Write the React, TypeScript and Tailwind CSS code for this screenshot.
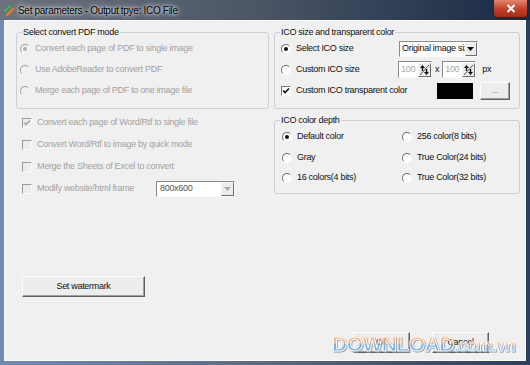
import type { ReactNode } from "react";

const FONT = { fontFamily: '"Liberation Sans", Arial, sans-serif' };

function Radio({ checked, disabled }: { checked?: boolean; disabled?: boolean }) {
  return (
    <span
      className={`relative flex h-[10px] w-[10px] shrink-0 items-center justify-center rounded-full border border-b-[#fafafa] border-l-[#6f6f6f] border-r-[#fafafa] border-t-[#6f6f6f] ${
        disabled ? "bg-[#f0f0f0] opacity-60" : "bg-white"
      }`}
    >
      {checked && <span className={`h-[4px] w-[4px] rounded-full ${disabled ? "bg-[#8a8a8a]" : "bg-[#111]"}`} />}
    </span>
  );
}

function Check({ checked, disabled }: { checked?: boolean; disabled?: boolean }) {
  return (
    <span
      className={`flex h-[10px] w-[10px] shrink-0 items-center justify-center border border-b-[#fdfdfd] border-l-[#777] border-r-[#fdfdfd] border-t-[#777] ${
        disabled ? "bg-[#ececec] opacity-70" : "bg-white"
      }`}
    >
      {checked && (
        <svg width="8" height="8" viewBox="0 0 8 8">
          <path d="M1 3.5 L3 5.5 L7 1.5" fill="none" stroke={disabled ? "#8c8c8c" : "#111"} strokeWidth="1.6" />
        </svg>
      )}
    </span>
  );
}

function Option({ kind, label, checked, disabled, w }: { kind: "radio" | "check"; label: string; checked?: boolean; disabled?: boolean; w?: string }) {
  return (
    <div className={`flex items-center gap-[5px] ${w ?? ""}`}>
      {kind === "radio" ? <Radio checked={checked} disabled={disabled} /> : <Check checked={checked} disabled={disabled} />}
      <span className={`whitespace-nowrap ${disabled ? "text-[#a2a2a2]" : "text-[#111]"}`}>{label}</span>
    </div>
  );
}

function Group({ title, className, children }: { title: string; className?: string; children: ReactNode }) {
  return (
    <fieldset className={`rounded-[3px] border border-[#c9d0d6] ${className ?? ""}`}>
      <legend className="ml-[5px] px-[1px] leading-[12px] text-[#111]">{title}</legend>
      {children}
    </fieldset>
  );
}

function ArrowBtn({ disabled }: { disabled?: boolean }) {
  return (
    <span className="flex h-full w-[13px] items-center justify-center border border-b-[#6d6d6d] border-l-[#f4f4f4] border-r-[#6d6d6d] border-t-[#f4f4f4] bg-[#ececec]">
      <svg width="7" height="4" viewBox="0 0 7 4">
        <path d="M0 0 H7 L3.5 4 Z" fill={disabled ? "#a8a8a8" : "#111"} />
      </svg>
    </span>
  );
}

function Spin() {
  return (
    <span className="flex h-[14px] w-[13px] items-center justify-center border border-b-[#6d6d6d] border-l-[#f4f4f4] border-r-[#6d6d6d] border-t-[#f4f4f4] bg-[#ececec]">
      <svg width="11" height="12" viewBox="0 0 11 12">
        <path d="M1 11 L10 1" stroke="#555" strokeWidth="1" />
        <path d="M3.5 1 L1 4 H2.8 V7 H4.2 V4 H6 Z" fill="#111" />
        <path d="M7.5 11 L10 8 H8.2 V5 H6.8 V8 H5 Z" fill="#111" />
      </svg>
    </span>
  );
}

function SpinBox() {
  return (
    <div className="flex h-[17px] w-[34px] items-center justify-between border border-b-[#fafafa] border-l-[#8a8a8a] border-r-[#fafafa] border-t-[#8a8a8a] bg-white pl-[2px]">
      <span className="text-[#a8a8a8]">100</span>
      <Spin />
    </div>
  );
}

function Button({ label, className }: { label: string; className?: string }) {
  return (
    <div
      className={`flex items-center justify-center border border-b-[#5f5f5f] border-l-[#fdfdfd] border-r-[#5f5f5f] border-t-[#fdfdfd] bg-[#ededed] text-[#111] shadow-[inset_-1px_-1px_0_#a0a0a0] ${className ?? ""}`}
    >
      {label}
    </div>
  );
}

export default function App() {
  return (
    <div
      className="flex h-[365px] w-[530px] flex-col overflow-hidden bg-linear-to-r from-[#6f8bb0] via-[#5a6a82] to-[#2c3e5c] text-[9px] tracking-[-0.3px]"
      style={FONT}
    >
      {/* title bar */}
      <div className="flex h-[20px] shrink-0 items-center bg-linear-to-r from-[#6c737e] via-[#4a5465] to-[#1a2a44] pl-[3px]">
        <svg width="13" height="13" viewBox="0 0 13 13">
          <path d="M2 7 L7 2" stroke="#3fb34f" strokeWidth="2.4" strokeLinecap="round" />
          <path d="M4 11 L10 5" stroke="#f07a20" strokeWidth="2.4" strokeLinecap="round" />
        </svg>
        <span className="ml-[2px] text-[10px] text-black [text-shadow:0_0_6px_#fff,0_0_3px_#fff]">
          Set parameters - Output tpye: ICO File
        </span>
        <div className="ml-auto mr-[2px] flex h-[18px] w-[35px] self-start items-center justify-center rounded-b-[4px] border border-t-0 border-[#4a1a12] bg-linear-to-b from-[#e0866e] via-[#c4432a] to-[#a52a16]">
          <svg width="10" height="9" viewBox="0 0 10 9">
            <path d="M1.5 1 L8.5 8 M8.5 1 L1.5 8" stroke="#fff" strokeWidth="2" />
          </svg>
        </div>
      </div>

      {/* client area */}
      <div className="relative mx-[4px] mb-[4px] flex flex-1 flex-col border border-[#fbfbfb] bg-[#f0f0f0] pl-[11px] pr-[5px] pt-[5px]">
        <div className="flex">
          {/* left column */}
          <div className="flex w-[253px] flex-col">
            <Group title="Select convert PDF mode" className="h-[83px]">
              <div className="flex flex-col pl-[3px]">
                <div className="flex h-[21px] items-center">
                  <Option kind="radio" label="Convert each page of PDF to single image" checked disabled />
                </div>
                <div className="flex h-[21px] items-center">
                  <Option kind="radio" label="Use AdobeReader to convert PDF" disabled />
                </div>
                <div className="flex h-[21px] items-center">
                  <Option kind="radio" label="Merge each page of PDF to one image file" disabled />
                </div>
              </div>
            </Group>

            <div className="mt-[3px] flex flex-col pl-[6px]">
              <div className="flex h-[22px] items-center">
                <Option kind="check" label="Convert each page of Word/Rtf to single file" checked disabled />
              </div>
              <div className="flex h-[22px] items-center">
                <Option kind="check" label="Convert Word/Rtf to image by quick mode" disabled />
              </div>
              <div className="flex h-[22px] items-center">
                <Option kind="check" label="Merge the Sheets of Excel to convert" disabled />
              </div>
              <div className="flex h-[22px] items-center">
                <Option kind="check" label="Modify website/html frame" disabled w="w-[134px]" />
                <div className="flex h-[16px] w-[79px] items-center justify-between border border-b-[#fafafa] border-l-[#8a8a8a] border-r-[#fafafa] border-t-[#8a8a8a] bg-white pl-[3px]">
                  <span className="text-[#555]">800x600</span>
                  <ArrowBtn disabled />
                </div>
              </div>
            </div>

            <Button label="Set watermark" className="ml-[6px] mt-[76px] h-[21px] w-[123px]" />
          </div>

          {/* right column */}
          <div className="ml-[5px] flex w-[246px] flex-col">
            <Group title="ICO size and transparent color" className="h-[83px]">
              <div className="flex flex-col pl-[6px]">
                <div className="flex h-[21px] items-center">
                  <Option kind="radio" label="Select ICO size" checked w="w-[118px]" />
                  <div className="flex h-[16px] w-[79px] items-center justify-between border border-b-[#fafafa] border-l-[#8a8a8a] border-r-[#fafafa] border-t-[#8a8a8a] bg-white pl-[2px]">
                    <span className="overflow-hidden whitespace-nowrap text-[#111]">Original image siz</span>
                    <ArrowBtn />
                  </div>
                </div>
                <div className="flex h-[21px] items-center">
                  <Option kind="radio" label="Custom ICO size" w="w-[117px]" />
                  <SpinBox />
                  <span className="mx-[3px] text-[#111]">x</span>
                  <SpinBox />
                  <span className="ml-[6px] text-[#111]">px</span>
                </div>
                <div className="flex h-[21px] items-center">
                  <Option kind="check" label="Custom ICO transparent color" checked w="w-[156px]" />
                  <span className="h-[16px] w-[36px] bg-black" />
                  <Button label="..." className="ml-[7px] h-[18px] w-[30px] text-[#888]" />
                </div>
              </div>
            </Group>

            <Group title="ICO color depth" className="mt-[5px] h-[80px]">
              <div className="grid grid-cols-[120px_1fr] pl-[7px]">
                <div className="flex h-[21px] items-center">
                  <Option kind="radio" label="Default color" checked />
                </div>
                <div className="flex h-[21px] items-center">
                  <Option kind="radio" label="256 color(8 bits)" />
                </div>
                <div className="flex h-[21px] items-center">
                  <Option kind="radio" label="Gray" />
                </div>
                <div className="flex h-[21px] items-center">
                  <Option kind="radio" label="True Color(24 bits)" />
                </div>
                <div className="flex h-[20px] items-center">
                  <Option kind="radio" label="16 colors(4 bits)" />
                </div>
                <div className="flex h-[20px] items-center">
                  <Option kind="radio" label="True Color(32 bits)" />
                </div>
              </div>
            </Group>
          </div>
        </div>

        {/* bottom buttons */}
        <div className="mt-auto mb-[7px] flex justify-end pr-[31px]">
          <Button label="Ok" className="h-[21px] w-[57px]" />
          <Button label="Cancel" className="ml-[22px] h-[21px] w-[57px]" />
        </div>

        {/* site watermark */}
        <div className="pointer-events-none absolute left-[327px] top-[312px] flex items-end whitespace-nowrap font-bold leading-none tracking-[-0.5px] opacity-75 [-webkit-text-stroke:1px_#ffffff] [filter:drop-shadow(1px_1px_0_#9a9a9a)]">
          <span className="bg-linear-to-b from-[#f3a36c] from-45% to-[#4e9ad8] to-55% bg-clip-text text-[21px] text-transparent">DOWNLOAD</span>
          <span className="bg-linear-to-b from-[#f3a36c] from-45% to-[#4e9ad8] to-55% bg-clip-text text-[17px] text-transparent">.com.vn</span>
        </div>
      </div>
    </div>
  );
}
